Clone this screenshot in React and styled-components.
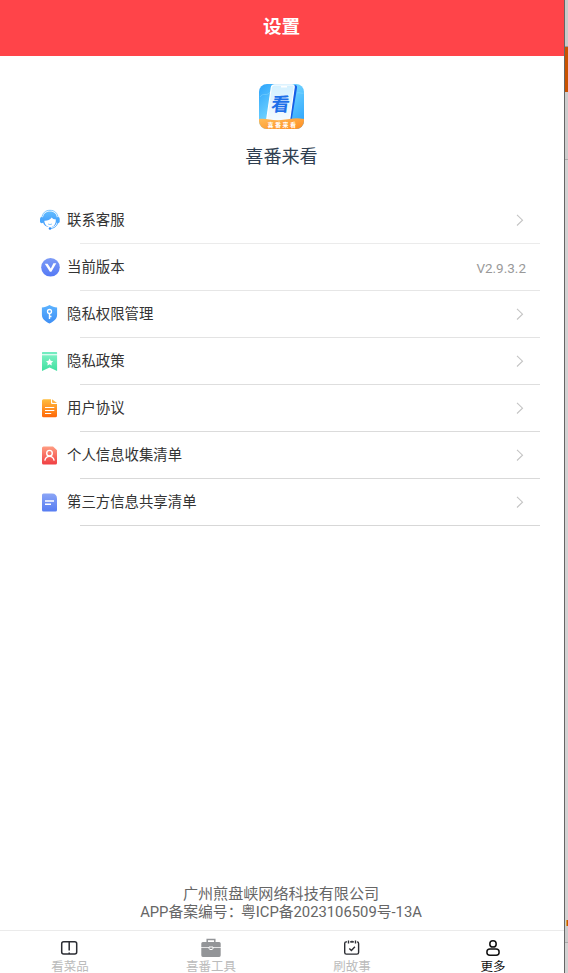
import React from 'react';
import styled, { createGlobalStyle } from 'styled-components';

const color_primary = '#ff4449';
const font_primary = "Roboto, 'Noto Sans CJK SC', sans-serif";

const GlobalStyle = createGlobalStyle`
    * {
        box-sizing: border-box;
    }

    body {
        margin: 0;
        overflow: hidden;
        font-family: ${font_primary};
        background: #fff;
    }

    svg {
        display: block;
    }
`;

const Window = styled.div`
    display: flex;
    width: 568px;
    height: 973px;
`;

const Screen = styled.main`
    display: flex;
    flex-direction: column;
    width: 564px;
    height: 100%;
    background: #fff;
`;

const Header = styled.header`
    height: 56px;
    padding-right: 1px;
    background: ${color_primary};
    color: #fff;
    font-size: 18.6px;
    font-weight: 700;
    line-height: 55px;
    text-align: center;
`;

const Brand = styled.section`
    display: flex;
    flex-direction: column;
    align-items: center;
    height: 141px;
    padding: 28px 1px 0 0;
`;

const BrandName = styled.h1`
    margin: 13px 0 0;
    color: #2f3e50;
    font-size: 18.1px;
    font-weight: 400;
    line-height: 30px;
`;

const List = styled.ul`
    margin: 0;
    padding: 0 24px 0 39px;
    list-style: none;
`;

const Row = styled.li`
    display: flex;
    align-items: center;
    height: 47px;
    padding: 0 14px 1px 0;
    background: linear-gradient(${({ $line }) => $line}, ${({ $line }) => $line})
        right bottom / 460px 1px no-repeat;
`;

const RowIcon = styled.span`
    display: flex;
    width: 22px;
    margin-right: 6px;
`;

const RowLabel = styled.span`
    flex: 1;
    padding-top: 2px;
    color: #333;
    font-size: 14.4px;
    line-height: 20px;
`;

const Version = styled.span`
    padding-top: 1px;
    color: #999;
    font-size: 13.5px;
    line-height: 16px;
`;

const Company = styled.footer`
    margin-top: auto;
    padding: 0 2px 9px 0;
    color: #666;
    font-size: 15.1px;
    line-height: 18px;
    text-align: center;
`;

const Licence = styled.div`
    font-size: 14.8px;
`;

const Colon = styled.span`
    letter-spacing: -1.5px;
`;

const TabBar = styled.nav`
    display: grid;
    grid-template-columns: repeat(4, 1fr);
    height: 43px;
    border-top: 1px solid #ebebeb;
`;

const Tab = styled.a`
    display: flex;
    flex-direction: column;
    align-items: center;
    padding: 6px 1px 0 0;
    color: ${({ $active }) => ($active ? '#111' : '#bbb')};
    font-size: 12.5px;
    line-height: 12px;
`;

const TabIcon = styled.span`
    height: 24px;
    flex-shrink: 0;
`;

const Behind = styled.aside`
    display: flex;
    flex-direction: column;
    width: 4px;
    border-left: 1px solid #666;
    background: #cfcfcf;
`;

const Strip = styled.div`
    flex: ${({ $height }) => ($height ? `0 0 ${$height}px` : 1)};
    background: ${({ $color }) => $color};
`;

const Badge = styled(Strip)`
    margin-left: 1px;
    border-left: 1px solid #d9a13c;
`;

const Logo = () => (
    <svg width="45" height="45" viewBox="0 0 45 45">
        <defs>
            <linearGradient id="sky" x1="0" y1="0" x2="1" y2="1">
                <stop offset="0" stopColor="#2ba3fb" />
                <stop offset=".45" stopColor="#6bd0ff" />
                <stop offset="1" stopColor="#239dfb" />
            </linearGradient>
            <linearGradient id="sand" x1="0" y1="0" x2="1" y2="1">
                <stop offset="0" stopColor="#ffbd59" />
                <stop offset="1" stopColor="#ff8d22" />
            </linearGradient>
            <linearGradient id="glass" x1="0" y1="0" x2="0" y2="1">
                <stop offset="0" stopColor="#d3f0ff" />
                <stop offset="1" stopColor="#f4fbff" />
            </linearGradient>
            <clipPath id="tile">
                <rect width="45" height="45" rx="8" />
            </clipPath>
        </defs>
        <g clipPath="url(#tile)">
            <rect width="45" height="45" fill="url(#sky)" />
            <path
                d="M1 13C4 8 8 13 11 8M38 9c3-1 4 1 7 0"
                stroke="#a2e5ff"
                strokeWidth="1"
                fill="none"
                opacity=".35"
            />
            <path d="M16 1h19.500q3 0 2.500 3l-5.500 33H11z" fill="#165fe6" />
            <path
                d="M15.500.8h17.500q2.500 0 2.200 2.500L30.500 37H7.500l4.800-33.500q.5-2.700 3.200-2.700z"
                fill="url(#glass)"
                stroke="#fff"
                strokeWidth="1.200"
            />
            <path d="M22 2.800h6" stroke="#fff" strokeWidth="1.500" />
            <text
                x="12.800"
                y="27.500"
                transform="skewX(-7) translate(2 0)"
                fill="#1c6fe9"
                fontSize="18.500"
                fontWeight="700"
                fontFamily="'Noto Sans CJK SC', sans-serif"
            >
                看
            </text>
            <path d="M0 35c8-1 13 2 22 1s15-3 23-1v10H0z" fill="url(#sand)" />
            <text
                x="8.500"
                y="43"
                fill="#fff"
                fontSize="6"
                fontWeight="700"
                letterSpacing="1.500"
                fontFamily="'Noto Sans CJK SC', sans-serif"
            >
                喜番来看
            </text>
        </g>
    </svg>
);

const Gradient = ({ id, from, to }) => (
    <linearGradient id={id} x1="0" y1="0" x2="0" y2="1">
        <stop offset="0" stopColor={from} />
        <stop offset="1" stopColor={to} />
    </linearGradient>
);

const rowIcons = {
    service: (
        <>
            <Gradient id="service" from="#62bcff" to="#3794fb" />
            <path
                d="M2.800 9C3.500 3.800 6.500 1.300 11 1.300S18.500 3.800 19.200 9"
                fill="none"
                stroke="#6bbcff"
                strokeWidth=".9"
            />
            <path
                d="M3.800 9.500C4 4.900 6.800 2.400 11 2.400s6.800 2.500 7 7.100v3.300c-.7 3.500-3.200 5.200-7 5.200s-6.500-1.700-7.200-5.200z"
                fill="url(#service)"
            />
            <path
                d="M5.300 11.800c3 .2 5.600-1 7.400-3.300.8 1.300 2.200 1.800 4 1.800.6 4.300-1.500 7.800-5.600 7.800-3.500 0-5.600-2.600-5.800-6.300z"
                fill="#fff"
            />
            <path d="M9 15q2 1.200 4 0" fill="none" stroke="#6bbcff" strokeWidth=".8" />
            <rect x="1" y="8" width="3.500" height="6.200" rx="1.700" fill="#4aa8fe" />
            <rect x="17.200" y="8" width="3.500" height="6.200" rx="1.700" fill="#4aa8fe" />
            <path
                d="M18.800 14c-1 3.200-3.500 5.300-7.500 5.500"
                fill="none"
                stroke="#4aa8fe"
                strokeWidth=".9"
            />
            <circle cx="11" cy="19.500" r="1.300" fill="#2f8dfa" />
        </>
    ),
    version: (
        <>
            <Gradient id="version" from="#7d9bf6" to="#5479f5" />
            <circle cx="11.500" cy="11.300" r="9.300" fill="url(#version)" />
            <path
                d="M5.800 7.800h2.800l3.200 4.700 2.600-5.200h2.900l-4.900 8.500h-1.500z"
                fill="#fff"
            />
        </>
    ),
    shield: (
        <>
            <Gradient id="shield" from="#5cb3ff" to="#3f8ff5" />
            <path
                d="M10.500 1.900c2.500 1.700 5 2.400 7.600 2.600v7.200c0 4-3 6.600-7.600 8.700-4.600-2.100-7.600-4.700-7.600-8.700V4.500c2.600-.2 5.100-.9 7.600-2.600z"
                fill="url(#shield)"
            />
            <circle cx="10.500" cy="8.500" r="2" fill="none" stroke="#fff" strokeWidth="1.300" />
            <path d="M10.500 10.500v5.500M10.500 13.500h2" stroke="#fff" strokeWidth="1.400" />
        </>
    ),
    bookmark: (
        <>
            <Gradient id="bookmark" from="#7af0c2" to="#3fe0a0" />
            <path d="M3.600 2h13.800q.7 0 .7.700v1.500H3V2.700q0-.7.600-.7z" fill="#72ecc0" />
            <path d="M3 5.200h15.100v15.700l-7.500-3.500L3 20.900z" fill="url(#bookmark)" />
            <path
                d="m10.600 8.500 1.100 2.300 2.500.4-1.800 1.700.4 2.500-2.200-1.200-2.200 1.200.4-2.500L7 11.200l2.500-.4z"
                fill="#fff"
            />
        </>
    ),
    agreement: (
        <>
            <Gradient id="agreement" from="#ffbe3f" to="#ff6708" />
            <path
                d="M4.500 2.300H12v3.500q0 1.300 1.300 1.300H18v11.700q0 1.500-1.500 1.500h-12Q3 20.300 3 18.800v-15q0-1.500 1.500-1.500z"
                fill="url(#agreement)"
            />
            <path d="M13 2.300l5 3.800h-4q-1 0-1-1z" fill="#ffb348" />
            <path d="M6 10.500h9.300M6 13.500h9.300M6 16.500h6.200" stroke="#fff" strokeWidth="1.100" />
        </>
    ),
    person: (
        <>
            <Gradient id="person" from="#ff9d82" to="#f03e42" />
            <path
                d="M4.500 2.500H14l4 3.800V19q0 1.500-1.500 1.500h-12Q3 20.500 3 19V4q0-1.500 1.500-1.500z"
                fill="url(#person)"
            />
            <circle cx="10.500" cy="9.200" r="2.800" fill="none" stroke="#fff" strokeWidth="1.400" />
            <path
                d="M5.800 16.700c.6-3 2.400-4.300 4.700-4.300s4.100 1.300 4.700 4.300"
                fill="none"
                stroke="#fff"
                strokeWidth="1.400"
            />
        </>
    ),
    share: (
        <>
            <Gradient id="share" from="#8ba5f6" to="#567cf2" />
            <path
                d="M4.500 2.500H13q5 0 5 5.500v11q0 1.500-1.500 1.500h-12Q3 20.500 3 19V4q0-1.500 1.500-1.500z"
                fill="url(#share)"
            />
            <path d="M6 10h9M6 13.300h6" stroke="#fff" strokeWidth="1.400" />
        </>
    )
};

const Chevron = () => (
    <svg width="12" height="14" viewBox="0 0 12 14">
        <path d="M3 1.900 8.500 7.200 3 12.500" fill="none" stroke="#c4c4c4" strokeWidth="1.100" />
    </svg>
);

const tabIcons = {
    menu: (
        <g fill="none" stroke="#2b2d33" strokeWidth="1.500">
            <rect x="2.700" y="4.700" width="15" height="12.200" rx="2" />
            <path d="M10.200 5v8.500M10.200 15.500V17" />
        </g>
    ),
    tools: (
        <>
            <path d="M7.200 6V2.600h7.600V6" fill="none" stroke="#939598" strokeWidth="1.500" />
            <path
                d="M2.800 5h16.400q1.500 0 1.500 1.500v3.400H1.300V6.500Q1.300 5 2.800 5zM1.300 10.800h19.400v7.500q0 1.700-1.500 1.700H2.800q-1.500 0-1.500-1.700z"
                fill="#939598"
            />
            <path
                d="M9 10v1.300q0 1.300 2 1.300t2-1.300V10z"
                fill="#939598"
                stroke="#fff"
                strokeWidth="1"
            />
        </>
    ),
    story: (
        <g fill="none" stroke="#2b2d33" strokeWidth="1.400">
            <path d="M9 4.900h4M6 4.900h-.8q-1.500 0-1.500 1.500v9q0 1.700 1.700 1.700h10.500q1.700 0 1.700-1.700v-9q0-1.500-1.500-1.500H16M7.500 3.500v3M14.500 3.500v3M11 3.800v2" />
            <path d="m8.300 11.500 2.100 2 3.500-3.700" />
        </g>
    ),
    more: (
        <g fill="none" stroke="#111" strokeWidth="1.500">
            <circle cx="11" cy="6.900" r="3.200" />
            <rect x="4.900" y="12.100" width="12.200" height="6.200" rx="3" />
        </g>
    )
};

const rows = [
    { icon: 'service', label: '联系客服', line: '#ebebeb' },
    { icon: 'version', label: '当前版本', version: 'V2.9.3.2', line: '#e6e6e6' },
    { icon: 'shield', label: '隐私权限管理', line: '#e3e3e3' },
    { icon: 'bookmark', label: '隐私政策', line: '#dedede' },
    { icon: 'agreement', label: '用户协议', line: '#dbdbdb' },
    { icon: 'person', label: '个人信息收集清单', line: '#d9d9d9' },
    { icon: 'share', label: '第三方信息共享清单', line: '#d7d7d7' }
];

const tabs = [
    { icon: 'menu', label: '看菜品' },
    { icon: 'tools', label: '喜番工具' },
    { icon: 'story', label: '刷故事' },
    { icon: 'more', label: '更多', active: true }
];

const App = () => (
    <>
        <GlobalStyle />
        <Window>
            <Screen>
                <Header>设置</Header>
                <Brand>
                    <Logo />
                    <BrandName>喜番来看</BrandName>
                </Brand>
                <List>
                    {rows.map(({ icon, label, version, line }) => (
                        <Row key={icon} $line={line}>
                            <RowIcon>
                                <svg width="22" height="22" viewBox="0 0 22 22">
                                    {rowIcons[icon]}
                                </svg>
                            </RowIcon>
                            <RowLabel>{label}</RowLabel>
                            {version ? <Version>{version}</Version> : <Chevron />}
                        </Row>
                    ))}
                </List>
                <Company>
                    <div>广州煎盘峡网络科技有限公司</div>
                    <Licence>
                        APP备案编号<Colon>：</Colon>粤ICP备2023106509号-13A
                    </Licence>
                </Company>
                <TabBar>
                    {tabs.map(({ icon, label, active }) => (
                        <Tab key={icon} $active={active}>
                            <TabIcon>
                                <svg width="22" height="22" viewBox="0 0 22 22">
                                    {tabIcons[icon]}
                                </svg>
                            </TabIcon>
                            {label}
                        </Tab>
                    ))}
                </TabBar>
            </Screen>
            <Behind>
                <Strip $height={46} $color="#c9c9c9" />
                <Strip $height={1} $color="#999" />
                <Strip $height={45} $color="#c95200" />
                <Strip $height={67} $color="#cdcdcd" />
                <Strip $height={1} $color="#aaa" />
                <Strip $color="#d2d2d2" />
                <Badge $height={6} $color="#c95200" />
                <Strip $height={16} $color="#cbcbcb" />
                <Strip $height={1} $color="#aaa" />
                <Strip $height={30} $color="#d2d2d2" />
            </Behind>
        </Window>
    </>
);

export default App;
